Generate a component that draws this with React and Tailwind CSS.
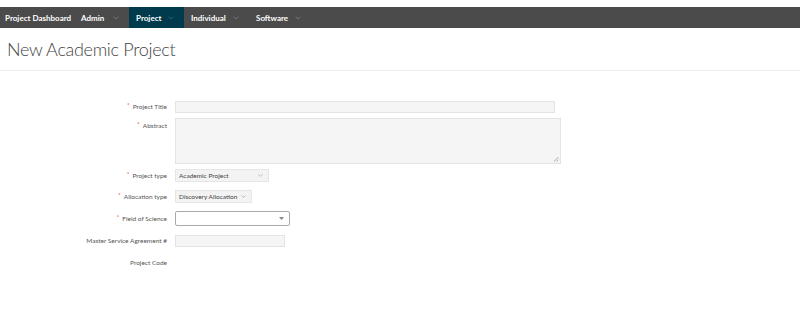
import { ChevronDown } from 'lucide-react';

const navItems = [
  { label: 'Admin', width: 'w-[55px]', active: false },
  { label: 'Project', width: 'w-[55px]', active: true },
  { label: 'Individual', width: 'w-[65px]', active: false },
  { label: 'Software', width: 'w-[62px]', active: false },
];

const Req = () => <span className="text-red-500 mr-[3px] relative -top-[2px]">*</span>;

const Row = ({ label, required, top, className = '', children }) => (
  <div className={`flex ${className}`}>
    <div className={`w-[167px] shrink-0 flex justify-end whitespace-nowrap ${top ? 'items-start pt-[3px]' : 'items-center'}`}>
      {required && <Req />}
      <span>{label}</span>
    </div>
    <div className="ml-[8px] flex items-center">{children}</div>
  </div>
);

const SelectBox = ({ value, width }) => (
  <div className={`${width} h-[13px] bg-[#f3f3f3] border border-[#e6e6e6] flex items-center justify-between pl-[3px] pr-[4px] text-[#444] whitespace-nowrap`}>
    <span>{value}</span>
    <ChevronDown size={7} strokeWidth={1.5} className="text-[#777] shrink-0" />
  </div>
);

export default function App() {
  return (
    <div className="w-[800px] h-[317px] bg-white overflow-hidden" style={{ fontFamily: 'Lato, "Open Sans", sans-serif' }}>
      <div className="h-[7px]" />
      <nav className="h-[21px] bg-[#4b4b4b] flex items-stretch text-[8px] font-bold text-white">
        <div className="w-[74px] flex items-center pl-[5px] whitespace-nowrap">Project Dashboard</div>
        {navItems.map((item) => (
          <div
            key={item.label}
            className={`${item.width} flex items-center justify-between pl-[7px] pr-[9px] ${item.active ? 'bg-[#003b4d]' : ''}`}
          >
            <span>{item.label}</span>
            <ChevronDown
              size={8}
              strokeWidth={1.5}
              className={item.active ? 'text-[#3a8fb0]' : 'text-[#9a9a9a]'}
            />
          </div>
        ))}
      </nav>

      <div className="h-[43px] border-b border-[#ececec] flex items-center pl-[7px]">
        <h1 className="text-[18px] font-light tracking-[-0.3px] text-[#444] leading-none">New Academic Project</h1>
      </div>

      <div className="pt-[30px] flex flex-col text-[6.5px] text-[#555]">
        <Row label="Project Title" required>
          <div className="w-[380px] h-[12px] bg-[#f5f5f5] border border-[#e3e3e3]" />
        </Row>
        <Row label="Abstract" required top className="mt-[5px]">
          <div className="w-[386px] h-[46px] bg-[#f5f5f5] border border-[#e3e3e3] relative">
            <svg className="absolute right-[1px] bottom-[1px]" width="6" height="6" viewBox="0 0 6 6">
              <path d="M5.5 1 L1 5.5 M5.5 3.5 L3.5 5.5" stroke="#999" strokeWidth="0.8" />
            </svg>
          </div>
        </Row>
        <Row label="Project type" required className="mt-[5px]">
          <SelectBox value="Academic Project" width="w-[94px]" />
        </Row>
        <Row label="Allocation type" required className="mt-[8px]">
          <SelectBox value="Discovery Allocation" width="w-[77px]" />
        </Row>
        <Row label="Field of Science" required className="mt-[8px]">
          <div className="w-[115px] h-[15px] bg-white border border-[#aaa] rounded-[2px] flex items-center justify-end pr-[5px]">
            <svg width="5" height="3" viewBox="0 0 5 3">
              <path d="M0 0 L5 0 L2.5 3 Z" fill="#888" />
            </svg>
          </div>
        </Row>
        <Row label="Master Service Agreement #" className="mt-[9px]">
          <div className="w-[110px] h-[12px] bg-[#f5f5f5] border border-[#e3e3e3]" />
        </Row>
        <Row label="Project Code" className="mt-[10px]">
          <div className="h-[12px]" />
        </Row>
      </div>
    </div>
  );
}
